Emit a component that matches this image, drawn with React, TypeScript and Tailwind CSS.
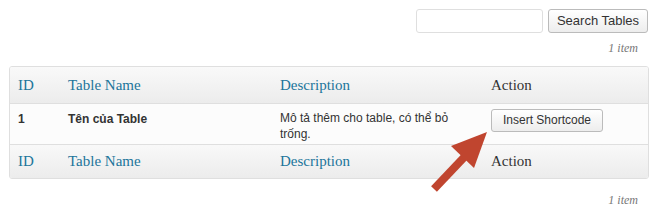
import React from 'react';

const serif = { fontFamily: '"Liberation Serif", Georgia, serif' };

const HeadRow: React.FC<{ top?: boolean }> = ({ top }) => (
  <tr
    className={`bg-gradient-to-b from-[#f9f9f9] to-[#ececec] text-[15px] ${top ? 'h-[36px]' : 'h-[34px]'}`}
    style={serif}
  >
    <th className="w-[50px] pl-2 text-left font-normal text-[#21759b]">ID</th>
    <th className="w-[212px] pl-2 text-left font-normal text-[#21759b]">Table Name</th>
    <th className="w-[211px] pl-2 text-left font-normal text-[#21759b]">Description</th>
    <th className="pl-2 text-left font-normal text-[#333]">Action</th>
  </tr>
);

const App: React.FC = () => {
  return (
    <div className="relative h-[219px] w-[654px] bg-white font-['Liberation_Sans',Arial,sans-serif] text-[#333]">
      <div className="flex justify-end gap-[5px] pt-[9px] pr-[6px]">
        <input className="h-[24px] w-[127px] rounded-[3px] border border-[#dfdfdf] bg-white" />
        <button className="h-[24px] w-[100px] rounded-[3px] border border-[#bbb] bg-gradient-to-b from-white to-[#ededed] text-[13px] text-[#333]">
          Search Tables
        </button>
      </div>
      <div className="mt-[6px] pr-[16px] text-right text-[12px] italic text-[#777]" style={serif}>
        1 item
      </div>

      <div className="mx-[9px] mt-[9px] w-[640px] overflow-hidden rounded-[3px] border border-[#dfdfdf]">
        <table className="w-full table-fixed border-collapse">
          <thead>
            <HeadRow top />
          </thead>
          <tbody>
            <tr className="h-[41px] border-y border-[#dfdfdf] bg-[#fcfcfc] align-top text-[12px]">
              <td className="pl-2 pt-[6px] font-bold">1</td>
              <td className="pl-2 pt-[6px] font-bold">Tên của Table</td>
              <td className="pl-2 pr-2 pt-[6px] leading-[16px]">Mô tả thêm cho table, có thể bỏ trống.</td>
              <td className="pl-2 pt-[5px]">
                <button className="h-[23px] w-[112px] rounded-[3px] border border-[#bbb] bg-gradient-to-b from-white to-[#ededed] text-[12px] text-[#333]">
                  Insert Shortcode
                </button>
              </td>
            </tr>
          </tbody>
          <tfoot>
            <HeadRow />
          </tfoot>
        </table>
      </div>

      <div className="mt-[12px] pr-[16px] text-right text-[12px] italic text-[#777]" style={serif}>
        1 item
      </div>

      <svg className="absolute left-[428px] top-[128px]" width="64" height="66" viewBox="0 0 64 66">
        <line x1="6" y1="61" x2="43" y2="22" stroke="#c0452f" strokeWidth="8" />
        <polygon points="59,4 23,18 46,40" fill="#c0452f" />
      </svg>
    </div>
  );
};

export default App;
